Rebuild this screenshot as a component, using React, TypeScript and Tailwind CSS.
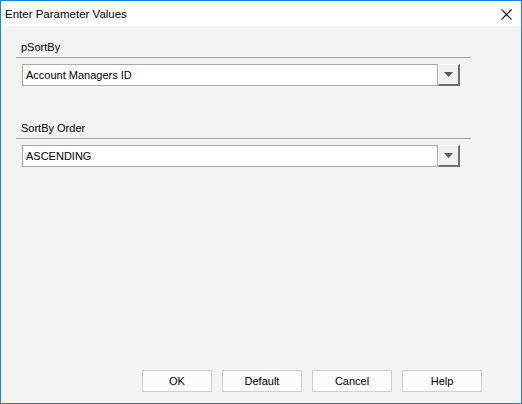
type ParamFieldProps = {
  label: string;
  value: string;
};

function ParamField({ label, value }: ParamFieldProps) {
  return (
    <div className="flex w-[455px] flex-col">
      <div className="h-[16px] pl-[5px] leading-[16px]">{label}</div>
      <div className="mt-[2px] h-px bg-[#a0a0a0]" />
      <div className="ml-[6px] mt-[6px] flex h-[22px] w-[438px]">
        <div className="flex flex-1 items-center border border-[#a9a9a9] bg-white pl-[3px] leading-[16px]">
          {value}
        </div>
        <div className="flex w-[22px] items-center justify-center border-t border-l border-t-white border-l-white border-r-2 border-b-2 border-r-[#6e6e6e] border-b-[#6e6e6e] bg-[#f0f0f0]">
          <svg width="9" height="5" viewBox="0 0 9 5">
            <path d="M0 0 H9 L4.5 5 Z" fill="#5a5a5a" />
          </svg>
        </div>
      </div>
    </div>
  );
}

const buttons = [
  { label: 'OK', width: 'w-[70px]' },
  { label: 'Default', width: 'w-[80px]' },
  { label: 'Cancel', width: 'w-[80px]' },
  { label: 'Help', width: 'w-[80px]' },
];

export default function App() {
  return (
    <div
      className="flex h-[404px] w-[522px] flex-col border border-[#1883d7] bg-[#f3f3f3] text-[11px] text-black"
      style={{ fontFamily: '"Segoe UI", "Liberation Sans", Arial, sans-serif' }}
    >
      {/* Title bar */}
      <div className="flex h-[25px] shrink-0 items-center justify-between bg-white pl-[4px] pr-[9px]">
        <span className="text-[11.5px] leading-[16px]">Enter Parameter Values</span>
        <svg width="11" height="11" viewBox="0 0 11 11" className="mt-[1px]">
          <path d="M0.5 0.5 L10.5 10.5 M10.5 0.5 L0.5 10.5" stroke="#000" strokeWidth="1.1" />
        </svg>
      </div>

      {/* Parameters */}
      <div className="flex flex-col gap-[34px] pl-[15px] pt-[13px]">
        <ParamField label="pSortBy" value="Account Managers ID" />
        <ParamField label="SortBy Order" value="ASCENDING" />
      </div>

      {/* Buttons */}
      <div className="mt-auto flex justify-end gap-[10px] pb-[11px] pr-[39px]">
        {buttons.map((b) => (
          <button
            key={b.label}
            className={`${b.width} h-[22px] border border-[#cfcfcf] bg-[#fcfcfc] leading-[16px]`}
          >
            {b.label}
          </button>
        ))}
      </div>
    </div>
  );
}
